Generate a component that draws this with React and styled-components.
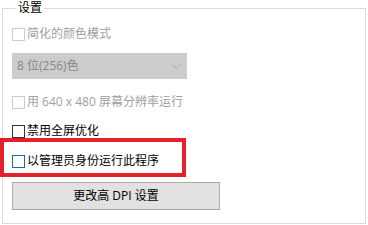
import React from "react";
import styled, { createGlobalStyle } from "styled-components";

const GlobalStyle = createGlobalStyle`
  html, body {
    margin: 0;
    padding: 0;
    background: #ffffff;
  }
  body {
    font-family: "Open Sans", "Noto Sans CJK SC", "Liberation Sans", sans-serif;
    font-size: 12px;
    color: #000;
  }
`;

const Group = styled.fieldset`
  box-sizing: border-box;
  width: 364px;
  margin: 0 0 0 2px;
  padding: 10px 0 13px 9px;
  border: 1px solid #dcdcdc;
  min-inline-size: 0;
`;

const Title = styled.legend`
  margin-left: 4px;
  padding: 0 2px;
  font-size: 12px;
  line-height: 16px;
  color: #000;
`;

const Column = styled.div`
  display: flex;
  flex-direction: column;
  align-items: flex-start;
`;

const Row = styled.label`
  display: flex;
  align-items: center;
  height: 16px;
  margin-top: ${(p) => p.$gap || 0}px;
  color: ${(p) => (p.$disabled ? "#a0a0a0" : "#000")};
  white-space: nowrap;
  line-height: 16px;
`;

const Box = styled.span`
  box-sizing: border-box;
  width: 13px;
  height: 13px;
  margin-right: 2px;
  background: #fff;
  border: 1px solid ${(p) => p.$color};
  flex: none;
`;

const Select = styled.div`
  box-sizing: border-box;
  display: flex;
  align-items: center;
  justify-content: space-between;
  width: 175px;
  height: 26px;
  margin-top: 11px;
  padding: 0 5px 0 4px;
  background: #cccccc;
  border: 1px solid #cccccc;
  color: #878787;
  line-height: 16px;
`;

const Highlight = styled.div`
  box-sizing: border-box;
  width: 186px;
  margin: -1px 0 0 -12px;
  padding: 11px 0 4px 8px;
  border: 4px solid #e5202a;
`;

const Button = styled.div`
  box-sizing: border-box;
  display: flex;
  align-items: center;
  justify-content: center;
  width: 208px;
  height: 28px;
  margin-top: 5px;
  background: #e1e1e1;
  border: 1px solid #adadad;
  color: #000;
  line-height: 16px;
`;

const Chevron = () => (
  <svg width="9" height="5" viewBox="0 0 9 5">
    <path d="M0.5 0.5 L4.5 4.5 L8.5 0.5" fill="none" stroke="#a8a8a8" strokeWidth="1" />
  </svg>
);

export default function App() {
  return (
    <>
      <GlobalStyle />
      <Group>
        <Title>设置</Title>
        <Column>
          <Row $disabled>
            <Box $color="#cccccc" />
            简化的颜色模式
          </Row>
          <Select>
            <span>8 位(256)色</span>
            <Chevron />
          </Select>
          <Row $disabled $gap={15}>
            <Box $color="#cccccc" />
            用 640 x 480 屏幕分辨率运行
          </Row>
          <Row $gap={13}>
            <Box $color="#333333" />
            禁用全屏优化
          </Row>
          <Highlight>
            <Row>
              <Box $color="#1f6aa5" />
              以管理员身份运行此程序
            </Row>
          </Highlight>
          <Button>更改高 DPI 设置</Button>
        </Column>
      </Group>
    </>
  );
}
